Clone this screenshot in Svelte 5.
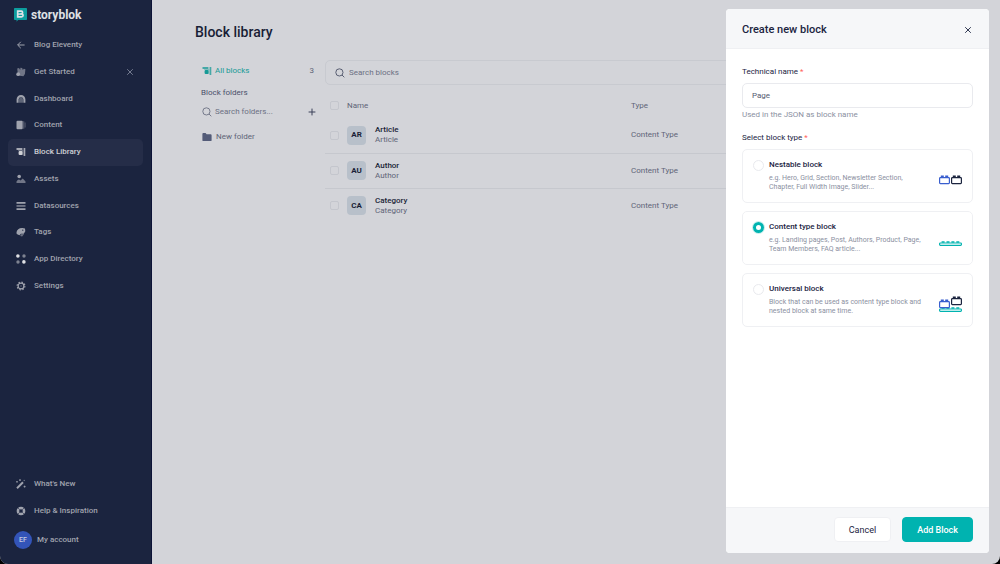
<script lang="ts">
    type NavItem = { label: string; icon: string; closable?: boolean };
    type Block = { id: string; initials: string; name: string; type: string };

    const mainNav: NavItem[] = [
        { label: 'Blog Eleventy', icon: 'back' },
        { label: 'Get Started', icon: 'wave', closable: true },
        { label: 'Dashboard', icon: 'dashboard' },
        { label: 'Content', icon: 'content' },
        { label: 'Block Library', icon: 'blocks' },
        { label: 'Assets', icon: 'assets' },
        { label: 'Datasources', icon: 'datasources' },
        { label: 'Tags', icon: 'tags' },
        { label: 'App Directory', icon: 'apps' },
        { label: 'Settings', icon: 'settings' },
    ];

    const footerNav: NavItem[] = [
        { label: "What's New", icon: 'wand' },
        { label: 'Help & Inspiration', icon: 'help' },
    ];

    const blocks: Block[] = [
        { id: 'article', initials: 'AR', name: 'Article', type: 'Content Type' },
        { id: 'author', initials: 'AU', name: 'Author', type: 'Content Type' },
        { id: 'category', initials: 'CA', name: 'Category', type: 'Content Type' },
    ];

    const blockTypes = [
        {
            id: 'nestable',
            title: 'Nestable block',
            text: 'e.g. Hero, Grid, Section, Newsletter Section, Chapter, Full Width Image, Slider...',
        },
        {
            id: 'content',
            title: 'Content type block',
            text: 'e.g. Landing pages, Post, Authors, Product, Page, Team Members, FAQ article...',
        },
        {
            id: 'universal',
            title: 'Universal block',
            text: 'Block that can be used as content type block and nested block at same time.',
        },
    ];

    let active = $state('Block Library');
    let technicalName = $state('Page');
    let blockType = $state('content');
    let drawerOpen = $state(true);
</script>

{#snippet brick(x: number, y: number, color: string)}
    <g fill="none" stroke={color} stroke-width="1.2">
        <rect x={x + 0.6} y={y + 2.6} width="9.8" height="6" rx="0.8" />
        <path d="M{x + 1.8} {y + 1.6}h3M{x + 6.2} {y + 1.6}h3" stroke-width="2.2" />
    </g>
{/snippet}

{#snippet plate(y: number)}
    <g fill="none" stroke="#00b3b0" stroke-width="1.2">
        <rect x="0.6" y={y + 2} width="21.8" height="2.4" rx="0.8" />
        <path d="M2.6 {y + 1}h3M7.5 {y + 1}h3M12.4 {y + 1}h3M17.3 {y + 1}h3" stroke-width="1.7" />
    </g>
{/snippet}

{#snippet blocksIcon()}
    <path d="M.5 1h5.9v2H.5z" opacity=".75" />
    <path d="M7.6 1h1.7v8H7.6z" opacity=".75" />
    <rect x="2.6" y="4" width="4" height="4" rx="1" />
    <path d="M2.2 3h4.6v1H2.2zM6.6 3h.6v5h-.6z" opacity=".4" />
{/snippet}

{#snippet icon(name: string)}
    <svg class="icon" viewBox="0 0 10 10" fill="currentColor" aria-hidden="true">
        {#if name === 'back'}
            <path d="M8.6 5H1.8M4.8 1.8 1.6 5l3.2 3.2" fill="none" stroke="currentColor" />
        {:else if name === 'wave'}
            <path d="M1.2 1.4 3 .9l1.2 2 .2-2.1 1.8.1.6 2 1-1.2 1.6.6-.5 4.6-1.5 2.3-3.6-.4L1.6 5z" opacity=".65" />
            <circle cx="2.2" cy="7.2" r="1.9" />
        {:else if name === 'dashboard'}
            <path d="M.6 8.8V5.4a4.4 4.4 0 0 1 8.8 0v3.4H7.4V5.6a2.4 2.4 0 0 0-4.8 0v3.2z" />
            <path d="M2.9 8.8V5.7a2.1 2.1 0 0 1 4.2 0v3.1z" opacity=".5" />
        {:else if name === 'content'}
            <rect x=".5" y=".8" width="6.2" height="8.4" rx="1" />
            <path d="M7.4 1.3h.8v7.4h-.8zM8.8 2.4h.6v5.2h-.6z" opacity=".65" />
        {:else if name === 'blocks'}
            {@render blocksIcon()}
        {:else if name === 'assets'}
            <circle cx="3.2" cy="2.5" r="1.8" />
            <path d="M.5 9V7.4Q2.5 4.2 4.5 6.5L6.8 4.4l2.7 3V9z" opacity=".65" />
        {:else if name === 'datasources'}
            <path d="M.5 1h9v1.7h-9zM.5 7.3h9V9h-9z" />
            <path d="M.5 4.1h9v1.7h-9z" opacity=".7" />
        {:else if name === 'tags'}
            <path d="M.5 5.2C1 2.6 3 .8 6.3.9L9 1.4l.3 2.8-1.5 2.6H4.9L3.4 8.2.7 6.9z" />
            <path d="m4.9 7.3 3.2-.2-2 2.3-1.8-.5z" opacity=".6" />
            <circle cx="6.8" cy="3.2" r=".6" fill="#1b243f" />
        {:else if name === 'apps'}
            <circle cx="1.9" cy="2" r="1.8" fill="#dfe0e4" />
            <circle cx="8" cy="2" r="1.7" opacity=".75" />
            <circle cx="2" cy="8" r="1.7" opacity=".75" />
            <circle cx="7.9" cy="7.9" r="1.8" fill="#dfe0e4" />
        {:else if name === 'settings'}
            <circle cx="5" cy="5" r="2.9" fill="none" stroke="currentColor" stroke-width="1.2" />
            <circle cx="5" cy="5" r="3.9" fill="none" stroke="currentColor" stroke-width="1.1" stroke-dasharray="1.5 1.563" />
            <circle cx="5" cy="5" r=".8" opacity=".5" />
        {:else if name === 'wand'}
            <path d="m1 9.2 6-6" stroke="currentColor" stroke-width="2" />
            <path d="M4 .2v1.8M3.1 1.1h1.8M1 2v1.6M.2 2.8h1.6M8.6 6.6v2M7.6 7.6h2M8.2.9v1.2" stroke="currentColor" stroke-width=".8" />
        {:else if name === 'help'}
            <circle cx="5" cy="5" r="3.1" fill="none" stroke="currentColor" stroke-width="2.5" />
            <path d="m1.8 1.8 2 2M6.2 6.2l2 2M8.2 1.8l-2 2M3.8 6.2l-2 2" stroke="#1b243f" stroke-width=".6" />
        {:else if name === 'search'}
            <circle cx="4.4" cy="4.4" r="3.6" fill="none" stroke="currentColor" stroke-width=".8" />
            <path d="m7 7 2.3 2.3" stroke="currentColor" stroke-width=".8" />
        {:else if name === 'folder'}
            <path d="M.4 2q0-.9.9-.9h2.3l1 1.2h4.1q.9 0 .9.9v5q0 .9-.9.9H1.3q-.9 0-.9-.9z" />
        {:else if name === 'plus'}
            <path d="M5 1.6v6.8M1.6 5h6.8" stroke="currentColor" stroke-width="1" />
        {:else if name === 'close'}
            <path d="m2.2 2.2 5.6 5.6M7.8 2.2 2.2 7.8" stroke="currentColor" stroke-width=".9" />
        {/if}
    </svg>
{/snippet}

{#snippet navRow(item: NavItem)}
    <li class:active={active === item.label}>
        <a href="#{item.icon}" onclick={() => (active = item.label)}>
            {@render icon(item.icon)}
            {item.label}
        </a>
        {#if item.closable}
            <button class="plain dismiss" aria-label="Dismiss">{@render icon('close')}</button>
        {/if}
    </li>
{/snippet}

<div class="app">
    <aside class="sidebar">
        <a class="logo" href="#home">
            <svg viewBox="0 0 13 14" aria-hidden="true">
                <path d="M.8 0h11.4q.8 0 .8.8v10.4q0 .8-.8.8H4L2.6 13.8V12H.8Q0 12 0 11.2V.8Q0 0 .8 0z" fill="#0d9d9e" />
                <path d="M3.7 3.2h3.6q1.3 0 1.3 1.3 0 1-.8 1.3 1.3.2 1.3 1.5 0 1.6-1.6 1.6H3.7z" fill="none" stroke="#dfe3e7" stroke-width="1.7" />
                <path d="M4 6h3.8" stroke="#dfe3e7" stroke-width="1.2" />
            </svg>
            storyblok
        </a>
        <ul class="nav">
            {#each mainNav as item}
                {@render navRow(item)}
            {/each}
        </ul>
        <ul class="nav bottom">
            {#each footerNav as item}
                {@render navRow(item)}
            {/each}
        </ul>
        <a class="account" href="#account">
            <span class="avatar">EF</span>
            My account
        </a>
    </aside>

    <main>
        <h1>Block library</h1>
        <div class="columns">
            <section class="folders">
                <a class="all" href="#all">
                    <svg class="icon" viewBox="0 0 10 10" fill="currentColor" aria-hidden="true">{@render blocksIcon()}</svg>
                    All blocks
                    <span class="count">3</span>
                </a>
                <h2>Block folders</h2>
                <div class="folder-search">
                    {@render icon('search')}
                    <input type="text" placeholder="Search folders..." aria-label="Search folders" />
                    <button class="plain" aria-label="Add folder">{@render icon('plus')}</button>
                </div>
                <a class="folder" href="#new">
                    {@render icon('folder')}
                    New folder
                </a>
            </section>

            <section class="list">
                <div class="search">
                    {@render icon('search')}
                    <input type="text" placeholder="Search blocks" aria-label="Search blocks" />
                </div>
                <table>
                    <thead>
                        <tr>
                            <th class="check"><input type="checkbox" aria-label="Select all" /></th>
                            <th class="name">Name</th>
                            <th>Type</th>
                        </tr>
                    </thead>
                    <tbody>
                        {#each blocks as block (block.id)}
                            <tr>
                                <td class="check"><input type="checkbox" aria-label="Select {block.name}" /></td>
                                <td class="name">
                                    <div class="block">
                                        <span class="badge">{block.initials}</span>
                                        <div>
                                            <strong>{block.name}</strong>
                                            <span>{block.name}</span>
                                        </div>
                                    </div>
                                </td>
                                <td>{block.type}</td>
                            </tr>
                        {/each}
                    </tbody>
                </table>
            </section>
        </div>
    </main>

    {#if drawerOpen}
        <form class="drawer" onsubmit={(e) => e.preventDefault()}>
            <header>
                <h2>Create new block</h2>
                <button type="button" class="plain" aria-label="Close" onclick={() => (drawerOpen = false)}>
                    {@render icon('close')}
                </button>
            </header>
            <div class="body">
                <label class="title" for="technical-name">Technical name <b>*</b></label>
                <input id="technical-name" class="text" type="text" bind:value={technicalName} />
                <p class="hint">Used in the JSON as block name</p>

                <fieldset>
                    <legend class="title">Select block type <b>*</b></legend>
                    <div class="cards">
                        {#each blockTypes as option (option.id)}
                            <label class="card">
                                <input type="radio" name="block-type" value={option.id} bind:group={blockType} />
                                <span class="info">
                                    <strong>{option.title}</strong>
                                    <span>{option.text}</span>
                                </span>
                                <svg class="art" viewBox="0 0 23 18" aria-hidden="true">
                                    {#if option.id === 'nestable'}
                                        {@render brick(0, 4, '#395ece')}
                                        {@render brick(12, 4, '#1b243f')}
                                    {:else if option.id === 'content'}
                                        {@render plate(8)}
                                    {:else}
                                        {@render plate(12)}
                                        {@render brick(0, 4, '#395ece')}
                                        {@render brick(12, 1, '#1b243f')}
                                    {/if}
                                </svg>
                            </label>
                        {/each}
                    </div>
                </fieldset>
            </div>
            <footer>
                <button type="button" class="cancel" onclick={() => (drawerOpen = false)}>Cancel</button>
                <button type="submit" class="submit">Add Block</button>
            </footer>
        </form>
    {/if}
</div>

<style>
    :global(body) {
        background: #000;
    }

    .app {
        display: flex;
        min-height: 100vh;
        font: 400 8px/10px Roboto, sans-serif;
        color: #5f6478;
        background: #d3d4d9;
        border-radius: 0 0 8px 8px;
        overflow: hidden;
    }

    .app * {
        box-sizing: border-box;
    }

    h1, h2, p, ul, fieldset {
        margin: 0;
        padding: 0;
        border: 0;
    }

    a {
        color: inherit;
        text-decoration: none;
    }

    input, button {
        margin: 0;
        font: inherit;
        color: inherit;
    }

    .plain {
        display: flex;
        padding: 0;
        border: 0;
        background: none;
        cursor: pointer;
    }

    .icon {
        width: 10px;
        height: 10px;
        flex: none;
    }

    .sidebar {
        flex: none;
        display: flex;
        flex-direction: column;
        width: 152px;
        padding: 8px 8px 15px;
        background: #1b243f;
        border-right: 1px solid #0c1236;
        color: #a0a3ae;
        font-weight: 500;
    }

    .logo {
        display: flex;
        align-items: center;
        gap: 4px;
        height: 14px;
        margin: 0 6px 10px;
        color: #dfe0e4;
        font-size: 12px;
        font-weight: 700;
    }

    .logo svg {
        width: 13px;
        height: 14px;
    }

    .nav {
        display: grid;
        grid-auto-rows: 1fr;
        height: 267px;
        list-style: none;
    }

    .nav.bottom {
        height: 53px;
        margin: auto 0 7px;
    }

    .nav li {
        display: flex;
        align-items: center;
        padding: 0 8px;
        border-radius: 5px;
    }

    .nav a {
        display: flex;
        flex: 1;
        align-items: center;
        gap: 8px;
    }

    .nav .active {
        background: #252d48;
        color: #d0d1d6;
    }

    .dismiss {
        color: #7e8498;
    }

    .account {
        display: flex;
        align-items: center;
        gap: 5px;
        padding: 0 6px;
    }

    .avatar {
        display: grid;
        place-items: center;
        width: 18px;
        height: 18px;
        border-radius: 50%;
        background: #3354b8;
        color: #c6cbe0;
        font-size: 7px;
    }

    main {
        flex: 1;
        min-width: 0;
        padding: 23px 43px;
    }

    h1 {
        color: #191e36;
        font-size: 14px;
        font-weight: 500;
        line-height: 18px;
    }

    .columns {
        display: flex;
        gap: 8px;
        margin-top: 19px;
    }

    .folders {
        flex: none;
        width: 122px;
    }

    .all, .folder, .folder-search {
        display: flex;
        align-items: center;
        gap: 3px;
        height: 20px;
        padding: 0 0 0 7px;
    }

    .all {
        padding-right: 3px;
        margin-top: 1px;
        color: #159a96;
    }

    .count {
        margin-left: auto;
        color: #5f6478;
    }

    .folders h2 {
        margin: 7px 0 4px 6px;
        color: #4a506a;
        font-size: 8px;
        font-weight: 400;
    }

    .folder-search input, .search input {
        flex: 1;
        min-width: 0;
        padding: 0;
        border: 0;
        outline: 0;
        background: none;
    }

    .folder-search .plain {
        color: #3b4159;
    }

    input::placeholder {
        color: #6c7083;
        opacity: 1;
    }

    .folder {
        gap: 4px;
        margin-top: 5px;
    }

    .folder .icon {
        color: #535b78;
    }

    .list {
        flex: 1;
        min-width: 0;
    }

    .search {
        display: flex;
        align-items: center;
        gap: 4px;
        height: 25px;
        padding: 0 9px;
        border: 1px solid #c8cad0;
        border-radius: 5px;
    }

    .search .icon {
        color: #3b4159;
    }

    table {
        width: 100%;
        border-collapse: collapse;
        table-layout: fixed;
    }

    th, td {
        padding: 0;
        text-align: left;
        font-weight: 400;
    }

    thead th {
        height: 33px;
        padding-top: 8px;
    }

    td {
        height: 35px;
    }

    tbody tr + tr {
        border-top: 1px solid #c6c8ce;
    }

    .check {
        width: 22px;
    }

    .check input {
        display: block;
        appearance: none;
        width: 9px;
        height: 9px;
        margin-left: 5px;
        border: 1px solid #c4c6cd;
        border-radius: 2px;
    }

    th.name {
        width: 284px;
    }

    .block {
        display: flex;
        align-items: center;
        gap: 9px;
    }

    .badge {
        display: grid;
        place-items: center;
        width: 19px;
        height: 19px;
        border-radius: 4px;
        background: #b8c0ca;
        color: #191e36;
        font-weight: 700;
    }

    .block strong {
        display: block;
        color: #191e36;
        font-weight: 500;
    }

    .drawer {
        position: fixed;
        top: 9px;
        right: 11px;
        bottom: 11px;
        display: flex;
        flex-direction: column;
        width: 263px;
        border-radius: 4px;
        background: #fff;
        overflow: hidden;
    }

    .drawer header {
        display: flex;
        align-items: center;
        justify-content: space-between;
        height: 40px;
        padding: 3px 16px 0;
        border-bottom: 1px solid #eff0f3;
        background: #f6f7f9;
        color: #1b243f;
    }

    .drawer h2 {
        font-size: 11px;
        font-weight: 500;
        line-height: 14px;
    }

    .body {
        flex: 1;
        padding: 18px 16px;
    }

    .title {
        display: block;
        padding: 0;
        color: #1b243f;
    }

    .title b {
        color: #ff6159;
        font-weight: 400;
    }

    .text {
        display: block;
        width: 100%;
        height: 25px;
        margin: 6px 0 2px;
        padding: 0 9px;
        border: 1px solid #e9eaee;
        border-radius: 5px;
        background: #fff;
        color: #545a70;
    }

    .hint {
        margin-bottom: 13px;
        color: #8b90a1;
    }

    .cards {
        display: grid;
        gap: 8px;
        margin-top: 6px;
    }

    .card {
        display: flex;
        align-items: center;
        height: 54px;
        padding: 0 10px;
        border: 1px solid #eff0f3;
        border-radius: 5px;
    }

    .card input {
        appearance: none;
        align-self: flex-start;
        flex: none;
        width: 11px;
        height: 11px;
        margin-top: 10px;
        border: 1px solid #e9eaee;
        border-radius: 50%;
    }

    .card input:checked {
        border: 3px solid #00b3b0;
        box-shadow: 0 0 0 1px #c4eeec;
    }

    .info {
        flex: 1;
        margin: 0 12px 0 5px;
        color: #8b90a1;
        font-size: 7px;
        line-height: 9px;
    }

    .info strong {
        display: block;
        margin-bottom: 4px;
        color: #1b243f;
        font-size: 8px;
        font-weight: 500;
        line-height: 10px;
    }

    .art {
        flex: none;
        width: 23px;
        height: 18px;
        margin-top: 7px;
    }

    .drawer footer {
        display: flex;
        align-items: center;
        justify-content: flex-end;
        gap: 11px;
        height: 46px;
        padding: 0 16px 2px;
        border-top: 1px solid #eff0f3;
        background: #f6f7f9;
    }

    .drawer footer button {
        height: 25px;
        border: 1px solid #eff0f3;
        border-radius: 4px;
        background: #fff;
        color: #1b243f;
        font-size: 9px;
        cursor: pointer;
    }

    .drawer footer .cancel {
        padding: 0 14px;
    }

    .drawer footer .submit {
        padding: 0 14px;
        border-color: #00b3b0;
        background: #00b3b0;
        color: #fff;
        font-weight: 500;
    }
</style>
